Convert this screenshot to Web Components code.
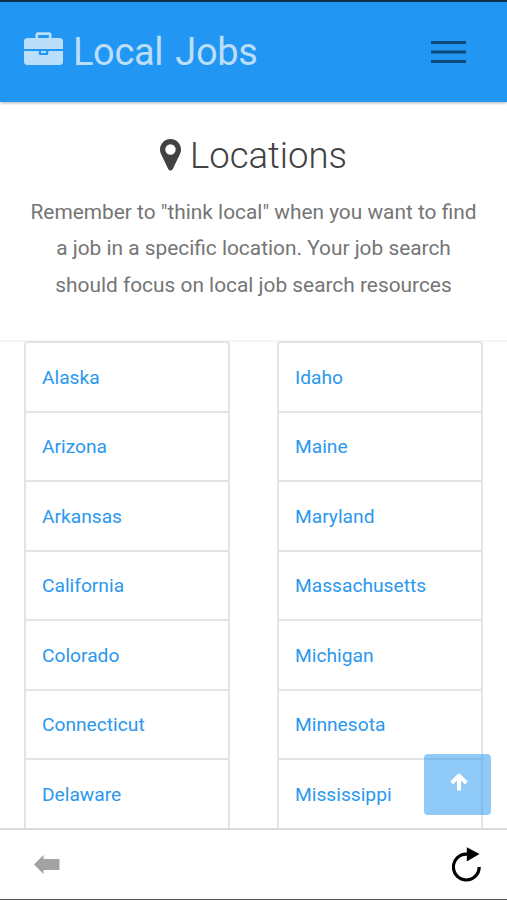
<!DOCTYPE html>
<html lang="en">
<head>
<meta charset="utf-8">
<title>Local Jobs</title>
<style>
html,body{margin:0;height:100%;overflow:hidden;background:#fff;font-family:Roboto,"Liberation Sans",sans-serif}
</style>
</head>
<body>
<jobs-app></jobs-app>
<script>
const define = (name, html, init) => customElements.define(name, class extends HTMLElement {
  constructor() {
    super();
    this.attachShadow({mode: 'open'}).innerHTML = html;
  }
  connectedCallback() { if (init) init(this); }
});

define('app-header', `
<style>
:host{display:flex;box-sizing:border-box;height:102px;flex:none;border-top:2px solid #0d2f4d;background:#2196f3;box-shadow:0 1px 3px rgba(0,0,0,.3);align-items:center;justify-content:space-between;padding:0 41px 0 24px;position:relative;z-index:1}
.brand{display:flex;align-items:center;color:#bbdefb;font-size:38px;line-height:48px;letter-spacing:-.35px;word-spacing:3px;white-space:nowrap}
.case{margin:-6px 10px 0 0}
svg{display:block}
</style>
<div class="brand"><svg class="case" width="39" height="34" viewBox="0 0 39 34"><path fill="none" stroke="#bbdefb" stroke-width="2.600" d="M12.800 7V2.800q0-1.200 1.200-1.200h11q1.200 0 1.200 1.200V7"/><path fill="#bbdefb" fill-rule="evenodd" d="M3.500 6h32Q39 6 39 9.500V17H0V9.500Q0 6 3.500 6zM0 19h14.700v2.500q0 1.500 1.500 1.500h6.600q1.500 0 1.500-1.500V19H39v10.500q0 3.500-3.500 3.500h-32Q0 33 0 29.500zM17.100 19h4.800v1.900h-4.800z"/></svg><span>Local Jobs</span></div>
<svg width="35" height="24" viewBox="0 0 35 24"><path stroke="#0d4a7c" stroke-width="3" d="M0 2.500h35M0 12h35M0 21.500h35"/></svg>`);

define('page-intro', `
<style>
:host{display:block;box-sizing:border-box;height:240px;flex:none;border-bottom:2px solid #f5f5f5;padding-top:30px;text-align:center}
h1{display:flex;justify-content:center;align-items:center;margin:0;font-weight:300;font-size:36.500px;line-height:48px;color:#424242}
svg{margin:-2px 9px 0 0}
p{margin:14px 0 0;font-size:20.870px;line-height:36.400px;color:#757575;white-space:nowrap}
</style>
<h1><svg width="21" height="32" viewBox="0 0 21 32"><path fill="#424242" fill-rule="evenodd" d="M10.500 0C4.700 0 0 4.700 0 10.500c0 1.700.3 3 .9 4.300L8.200 30q.7 1.500 2.300 1.500t2.300-1.500l7.300-15.200c.6-1.300.9-2.600.9-4.300C21 4.700 16.300 0 10.500 0zm0 5.300a5.200 5.200 0 1 1 0 10.400 5.200 5.200 0 0 1 0-10.400z"/></svg><span><slot name="title"></slot></span></h1>
<p><slot></slot></p>`);

define('place-item', `
<style>
:host{display:flex;align-items:center;box-sizing:border-box;height:69.500px;padding:2px 0 0 16px;border-bottom:2px solid #e4e4e4}
a{color:#2b98ee;font-size:19.200px;line-height:28px}
</style><a><slot></slot></a>`);

define('place-list', `
<style>
:host{display:block;box-sizing:border-box;width:206px;border:2px solid #e4e4e4;border-bottom:0;border-radius:4px 4px 0 0}
</style><div></div>`, el => {
  const box = el.shadowRoot.querySelector('div');
  box.replaceChildren(...el.getAttribute('places').split(',').map(name => {
    const item = document.createElement('place-item');
    item.textContent = name;
    return item;
  }));
});

define('top-button', `
<style>
:host{position:absolute;left:424px;top:754px;width:67px;height:61px;border-radius:4px;background:rgba(33,150,243,.5);display:flex;align-items:center;justify-content:center}
svg{margin:-5px 0 0 3px}
</style>
<svg width="18" height="18" viewBox="0 0 18 18"><path fill="none" stroke="#fff" stroke-width="4" stroke-linejoin="round" d="M9 17.500V3M1.700 10L9 2.600l7.300 7.400"/></svg>`);

define('bottom-bar', `
<style>
:host{display:flex;box-sizing:border-box;height:72px;flex:none;background:#fff;border-top:2px solid #d9d9d9;border-bottom:1.500px solid #555;justify-content:space-between;align-items:center;padding:0 25px 0 34px;position:relative}
</style>
<svg width="26" height="19" viewBox="0 0 26 19"><path fill="#a3a3a3" d="M0 9.500L9.500 0v4H25.500v11h-16v4z"/></svg>
<svg width="30" height="36" viewBox="0 0 30 36"><path fill="none" stroke="#000" stroke-width="3.200" d="M27.200 20.100a12.900 12.900 0 1 1-12.900-12.900h2"/><path d="M14.800.3L27.500 7 14.800 14.500z"/></svg>`);

define('jobs-app', `
<style>
:host{display:flex;flex-direction:column;height:900px;width:507px;position:relative;overflow:hidden}
main{display:flex;flex:1;min-height:0;overflow:hidden;gap:47px;padding-left:24px;margin-top:-1px;align-items:flex-start}
</style>
<app-header></app-header>
<page-intro><span slot="title">Locations</span>Remember to "think local" when you want to find<br>a job in a specific location. Your job search<br>should focus on local job search resources</page-intro>
<main>
<place-list places="Alaska,Arizona,Arkansas,California,Colorado,Connecticut,Delaware"></place-list>
<place-list places="Idaho,Maine,Maryland,Massachusetts,Michigan,Minnesota,Mississippi"></place-list>
</main>
<top-button></top-button>
<bottom-bar></bottom-bar>`);
</script>
</body>
</html>
